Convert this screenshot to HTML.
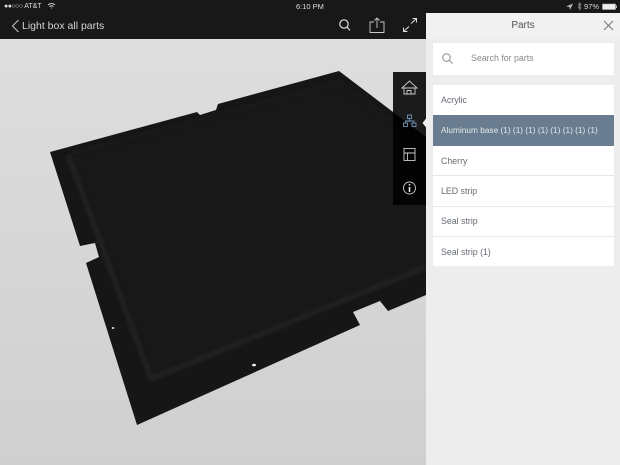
<!DOCTYPE html>
<html><head><meta charset="utf-8"><style>
html,body{margin:0;padding:0}
body{width:620px;height:465px;position:relative;overflow:hidden;font-family:"Liberation Sans",sans-serif;background:#d8d8d8}
.abs{position:absolute}
.row{position:absolute;left:433px;width:181px;height:30px;background:#fff;color:#666c74;font-size:8.8px;line-height:30px;text-indent:8px;white-space:nowrap;overflow:hidden}
</style></head><body>
<svg class="abs" style="left:0;top:0" width="620" height="465" viewBox="0 0 620 465">
<defs>
<linearGradient id="bg" x1="0" y1="0" x2="0" y2="1"><stop offset="0" stop-color="#dedede"/><stop offset="1" stop-color="#cfcfcf"/></linearGradient>
<filter id="b" x="-10%" y="-10%" width="120%" height="120%"><feGaussianBlur stdDeviation="2"/></filter>
<clipPath id="plate"><path d="M50 152L197 112L200 115L216 110L218 104L339 71L426 137V295L388 311L380 301L353 312L360 325L137 425L86 263L99 257L95 243L80 246Z"/></clipPath>
</defs>
<rect y="39" width="426" height="426" fill="url(#bg)"/>
<g clip-path="url(#plate)">
<rect x="40" y="60" width="390" height="370" fill="#161616"/>
<path d="M70 158L339 84L426 146V265L152 378Z" fill="#181818"/>
<path d="M68 155L339 82L426 146" fill="none" stroke="#1c1c1c" stroke-width="3" filter="url(#b)"/>
<path d="M426 267L151 379L68 155" fill="none" stroke="#272727" stroke-width="3.500" filter="url(#b)"/>
</g>
<ellipse cx="113" cy="328" rx="1.300" ry="1" fill="#ddd"/>
<ellipse cx="254" cy="365" rx="2" ry="1.300" fill="#eee"/>
</svg>
<div class="abs" style="left:0;top:0;width:620px;height:39px;background:#181818"></div>
<div class="abs" style="left:4px;top:2px;font-size:7px;color:#ddd;line-height:9px;white-space:nowrap"><span style="letter-spacing:-.5px">●●○○○</span> AT&amp;T</div>
<svg class="abs" style="left:47px;top:2px" width="9" height="8" viewBox="0 0 9 8" fill="none" stroke="#ccc"><path d="M1 3Q4.500 0 8 3M2.500 4.600Q4.500 3 6.500 4.600M4 6.200Q4.500 5.800 5 6.200"/></svg>
<div class="abs" style="left:296px;top:2px;font-size:7.500px;color:#ddd;line-height:9px">6:10 PM</div>
<div class="abs" style="left:584px;top:2px;font-size:7.500px;color:#ddd;line-height:9px">97%</div>
<svg class="abs" style="left:564px;top:2px" width="56" height="9" viewBox="0 0 56 9">
<path d="M2 4.500L9 1.500L6 8L5.500 5Z" fill="#bbb"/>
<path d="M14 2L17 6L15.500 7.500V1L17 2.500L14 6" fill="none" stroke="#888" stroke-width=".8"/>
<rect x="38.500" y="2" width="13" height="5.500" fill="#eee" stroke="#bbb" stroke-width=".5"/><rect x="52" y="3.500" width="1" height="2.500" fill="#bbb"/>
</svg>
<svg class="abs" style="left:11px;top:19px" width="9" height="14" viewBox="0 0 9 14" fill="none" stroke="#c8c8c8" stroke-width="1"><path d="M7.500 1L1.500 7L7.500 13"/></svg>
<div class="abs" style="left:22px;top:19px;font-size:10.500px;color:#d4d4d4;line-height:14px;white-space:nowrap">Light box all parts</div>
<svg class="abs" style="left:336px;top:17px" width="18" height="16" viewBox="0 0 18 16" fill="none" stroke="#ddd" stroke-width="1.200"><circle cx="8" cy="7" r="4.200"/><path d="M11 10L14 13.500"/></svg>
<svg class="abs" style="left:368px;top:17px" width="18" height="17" viewBox="0 0 18 17" fill="none" stroke="#ccc" stroke-width=".9"><path d="M6 5H2V15.500H16V5H12M9 11V1M6.500 3.500L9 1L11.500 3.500"/></svg>
<svg class="abs" style="left:402px;top:17px" width="16" height="16" viewBox="0 0 16 16" fill="none" stroke="#ddd"><path d="M9 6.500L14.500 1.500M10.500 1.500H14.500V5.500M7 9.500L1.500 14.500M1.500 10.500V14.500H5.500"/></svg>
<div class="abs" style="left:426px;top:13px;width:194px;height:452px;background:#ededed"></div>
<div class="abs" style="left:426px;top:13px;width:194px;height:26px;background:#f1f1f1;text-align:center;font-size:10px;line-height:26px;color:#555">Parts</div>
<svg class="abs" style="left:603px;top:20px" width="11" height="11" viewBox="0 0 11 11" stroke="#777" fill="none"><path d="M1 1L10 10M10 1L1 10"/></svg>
<div class="abs" style="left:433px;top:43px;width:181px;height:32px;background:#fff"></div>
<svg class="abs" style="left:441px;top:52px" width="13" height="13" viewBox="0 0 13 13" fill="none" stroke="#888"><circle cx="5.500" cy="5.500" r="3.800"/><path d="M8.300 8.300L11.500 11.500"/></svg>
<div class="abs" style="left:471px;top:53px;font-size:8.800px;color:#8a8a8a;line-height:11px">Search for parts</div>
<div class="row" style="top:85px">Acrylic</div>
<div class="row" style="top:115px;height:31px;line-height:31px;background:#6a7d90;color:#e3e8ec;font-size:8.300px">Aluminum base (1) (1) (1) (1) (1) (1) (1) (1)</div>
<div class="row" style="top:146px;height:29px;line-height:30px">Cherry</div>
<div class="abs" style="left:433px;top:175px;width:181px;height:1px;background:#e6e6e6"></div>
<div class="row" style="top:176px;height:30px">LED strip</div>
<div class="abs" style="left:433px;top:206px;width:181px;height:1px;background:#e9e9e9"></div>
<div class="row" style="top:207px;height:29px;line-height:29px">Seal strip</div>
<div class="abs" style="left:433px;top:236px;width:181px;height:1px;background:#e9e9e9"></div>
<div class="row" style="top:237px;height:29px">Seal strip (1)</div>
<div class="abs" style="left:393px;top:72px;width:33px;height:133px;background:rgba(0,0,0,.88)"></div>
<svg class="abs" style="left:393px;top:72px" width="40" height="133" viewBox="0 0 40 133" fill="none" stroke="#ccc" stroke-width=".9">
<path d="M29.500 51L33.500 46V56Z" fill="#f2f2f2" stroke="none"/>
<path d="M9 16L16.500 9L24 16H9ZM11 16V22H22V16M14 22V18.500H18V22"/>
<g stroke="#6f93b8"><rect x="14.500" y="43" width="4" height="3.500"/><rect x="10.500" y="51" width="4" height="3.500"/><rect x="19" y="51" width="4" height="3.500"/><path d="M16.500 46.500V49M12.500 51V49H21V51"/></g>
<rect x="11" y="76.500" width="11" height="12"/><path d="M11 81H22M14.500 81V88.500"/>
<circle cx="16.500" cy="116" r="6"/><path d="M16.500 115V120M16.500 112V113.500" stroke-width="1.500" stroke="#eee"/>
</svg>
</body></html>
